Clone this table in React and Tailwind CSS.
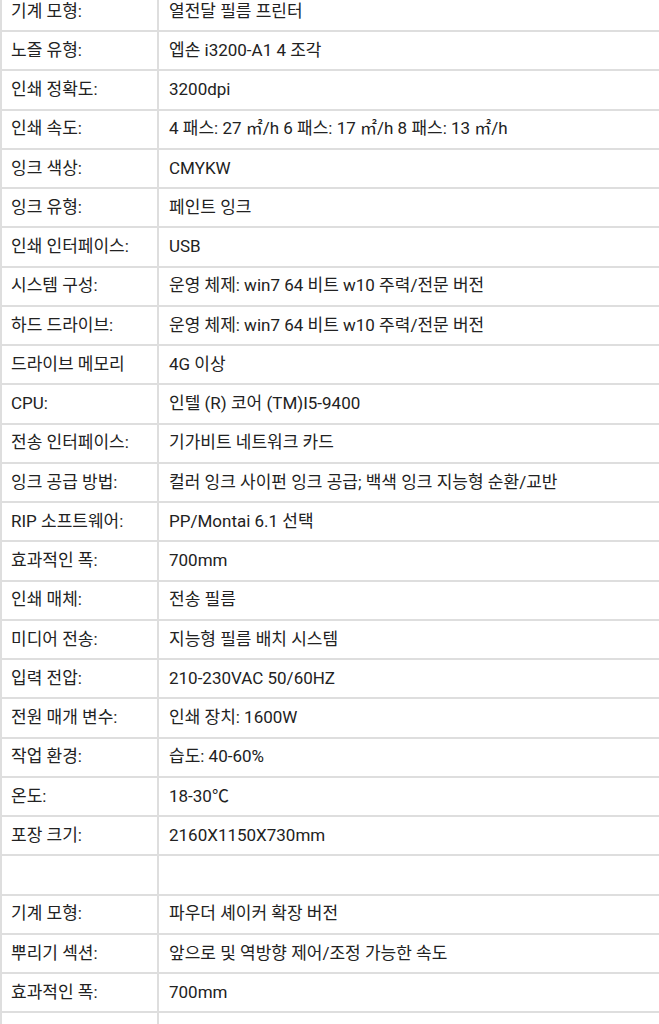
const specs = [
  ["기계 모형:", "열전달 필름 프린터"],
  ["노즐 유형:", "엡손 i3200-A1 4 조각"],
  ["인쇄 정확도:", "3200dpi"],
  ["인쇄 속도:", "4 패스: 27 ㎡/h 6 패스: 17 ㎡/h 8 패스: 13 ㎡/h"],
  ["잉크 색상:", "CMYKW"],
  ["잉크 유형:", "페인트 잉크"],
  ["인쇄 인터페이스:", "USB"],
  ["시스템 구성:", "운영 체제: win7 64 비트 w10 주력/전문 버전"],
  ["하드 드라이브:", "운영 체제: win7 64 비트 w10 주력/전문 버전"],
  ["드라이브 메모리", "4G 이상"],
  ["CPU:", "인텔 (R) 코어 (TM)I5-9400"],
  ["전송 인터페이스:", "기가비트 네트워크 카드"],
  ["잉크 공급 방법:", "컬러 잉크 사이펀 잉크 공급; 백색 잉크 지능형 순환/교반"],
  ["RIP 소프트웨어:", "PP/Montai 6.1 선택"],
  ["효과적인 폭:", "700mm"],
  ["인쇄 매체:", "전송 필름"],
  ["미디어 전송:", "지능형 필름 배치 시스템"],
  ["입력 전압:", "210-230VAC 50/60HZ"],
  ["전원 매개 변수:", "인쇄 장치: 1600W"],
  ["작업 환경:", "습도: 40-60%"],
  ["온도:", "18-30℃"],
  ["포장 크기:", "2160X1150X730mm"],
  ["", ""],
  ["기계 모형:", "파우더 셰이커 확장 버전"],
  ["뿌리기 섹션:", "앞으로 및 역방향 제어/조정 가능한 속도"],
  ["효과적인 폭:", "700mm"],
  ["", ""],
]

const SpecRow = ({ label, value }) => {
  return (
    <div className="flex h-[39.25px] border-b-2 border-[#dedede]">
      <div className="w-[157px] shrink-0 border-r-2 border-[#dedede] pl-[9px] flex items-center">
        {label}
      </div>
      <div className="flex-1 pl-[10px] flex items-center whitespace-nowrap">
        {value}
      </div>
    </div>
  )
}

const App = () => {
  return (
    <div
      className="h-[1024px] overflow-hidden bg-white text-[#222] text-[17px]"
      style={{ fontFamily: 'Roboto, "Noto Sans CJK KR", sans-serif' }}
    >
      <div className="mt-[-7.25px] border-l-2 border-[#dedede]">
        {specs.map(([label, value], i) => (
          <SpecRow key={i} label={label} value={value} />
        ))}
      </div>
    </div>
  )
}

export default App
